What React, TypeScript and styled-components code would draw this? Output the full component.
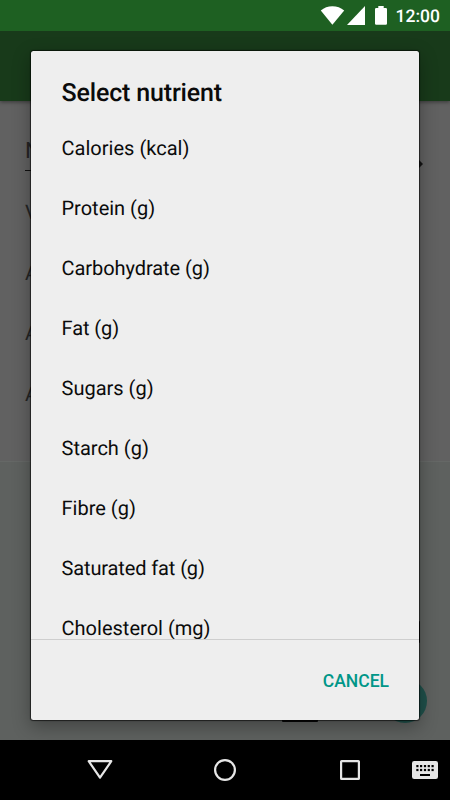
import React from "react";
import styled, { createGlobalStyle } from "styled-components";

const GlobalStyle = createGlobalStyle`
  *, *::before, *::after { box-sizing: border-box; }
  body {
    margin: 0;
    background: #000;
    font-family: Roboto, sans-serif;
    text-rendering: geometricPrecision;
  }
`;

const Screen = styled.div`
  width: 450px;
  height: 800px;
  display: flex;
  flex-direction: column;
  overflow: hidden;
`;

const StatusBar = styled.header`
  flex: 0 0 31px;
  display: flex;
  align-items: center;
  justify-content: flex-end;
  background: #1e6022;
  color: #fff;
`;

const StatusIcons = styled.svg`
  display: block;
  width: 70px;
  height: 31px;
`;

const Clock = styled.time`
  width: 60px;
  padding: 2px 0 0 5.5px;
  font-size: 17.5px;
  line-height: 20px;
  font-weight: 500;
`;

const Content = styled.main`
  position: relative;
  flex: 1;
  min-height: 0;
  display: flex;
  flex-direction: column;
  overflow: hidden;
  background: #5e615f;
`;

const AppBar = styled.div`
  flex: 0 0 70px;
  background: #183a1a;
  box-shadow: 0 1px 4px rgba(0, 0, 0, 0.45);
  z-index: 1;
`;

const Form = styled.div`
  flex: 0 0 361px;
  display: flex;
  flex-direction: column;
  padding: 30px 25px 0;
  background: #616161;
  border-bottom: 1px solid #656866;
  color: #252525;
`;

const NameField = styled.div`
  display: flex;
  justify-content: space-between;
  height: 40px;
  font-size: 22.5px;
  line-height: 40px;
`;

const NameInput = styled.div`
  width: 340px;
  height: 40px;
  border-bottom: 1px solid #101010;
`;

const FieldArrow = styled.svg`
  width: 12px;
  height: 12px;
  margin: 27px 2px 0 0;
  fill: #151515;
`;

const FormRows = styled.div`
  display: flex;
  flex-direction: column;
  padding-top: 11px;
`;

const FormRow = styled.div`
  height: 60.7px;
  font-size: 20px;
  line-height: 61px;
`;

const Fab = styled.div`
  position: absolute;
  right: 23px;
  bottom: 17px;
  width: 44px;
  height: 44px;
  border-radius: 50%;
  background: #1f504a;
`;

const Peek = styled.div<{ $x: number; $y: number; $w: number; $h: number }>`
  position: absolute;
  left: ${(p) => p.$x}px;
  top: ${(p) => p.$y}px;
  width: ${(p) => p.$w}px;
  height: ${(p) => p.$h}px;
  background: #080808;
  border-radius: 1px;
`;

const Overlay = styled.div`
  position: absolute;
  inset: 0;
  z-index: 2;
  padding: 20px 31px;
`;

const Dialog = styled.section`
  height: 669px;
  display: flex;
  flex-direction: column;
  overflow: hidden;
  border-radius: 2.5px;
  background: #eee;
  color: #0b0b0b;
  box-shadow:
    0 0 1px 1px rgba(0, 0, 0, 0.6),
    0 6px 18px 1px rgba(0, 0, 0, 0.3);
`;

const Title = styled.h1`
  flex: 0 0 67px;
  margin: 0;
  padding: 27px 30.5px 0;
  font-size: 25px;
  line-height: 32px;
  font-weight: 500;
  letter-spacing: -0.16px;
`;

const List = styled.ul`
  flex: 1;
  min-height: 0;
  margin: 0;
  padding: 0;
  overflow: hidden;
  list-style: none;
`;

const Item = styled.li<{ $tracking: number }>`
  height: 60px;
  padding: 0 30.5px;
  font-size: 20px;
  line-height: 60px;
  letter-spacing: ${(p) => p.$tracking}px;
`;

const Actions = styled.footer`
  flex: 0 0 81px;
  display: flex;
  align-items: center;
  justify-content: flex-end;
  padding: 1px 30px 0;
  border-top: 1px solid #cecece;
`;

const TextButton = styled.button`
  padding: 0;
  border: 0;
  background: none;
  color: #009688;
  font: 500 17.5px/20px Roboto, sans-serif;
`;

const NavBar = styled.nav`
  flex: 0 0 60px;
  background: #000;
`;

const NavIcons = styled.svg`
  display: block;
  width: 450px;
  height: 60px;
`;

const nutrients = [
  { name: "Calories (kcal)", tracking: 0.02 },
  { name: "Protein (g)", tracking: 0 },
  { name: "Carbohydrate (g)", tracking: -0.06 },
  { name: "Fat (g)", tracking: -0.08 },
  { name: "Sugars (g)", tracking: 0 },
  { name: "Starch (g)", tracking: 0 },
  { name: "Fibre (g)", tracking: 0 },
  { name: "Saturated fat (g)", tracking: -0.12 },
  { name: "Cholesterol (mg)", tracking: 0.02 },
];

const keyColumns = [416.3, 420, 423.9, 427.7, 431.5];

export default function App() {
  return (
    <Screen>
      <GlobalStyle />
      <StatusBar>
        <StatusIcons viewBox="320 0 70 31" fill="#fff">
          <path d="M332.4 24.8 320.8 10.4C324 7.8 328 6.2 332.4 6.2s8.6 1.6 11.8 4.2Z" />
          <path d="M365 6v19h-18Z" />
          <path d="M378.3 6h5.4v2h2.1q1.2 0 1.2 1.2v14.3q0 1.2-1.2 1.2h-9.6q-1.2 0-1.2-1.2V9.2q0-1.2 1.2-1.2h2.1Z" />
        </StatusIcons>
        <Clock>12:00</Clock>
      </StatusBar>
      <Content>
        <AppBar />
        <Form>
          <NameField>
            <NameInput>N</NameInput>
            <FieldArrow viewBox="0 0 12 12">
              <path d="M6 0 12 6 6 12Z" />
            </FieldArrow>
          </NameField>
          <FormRows>
            <FormRow>V</FormRow>
            <FormRow>A</FormRow>
            <FormRow>A</FormRow>
            <FormRow>A</FormRow>
          </FormRows>
        </Form>
        <Fab />
        <Peek $x={282} $y={680} $w={36} $h={10.5} />
        <Peek $x={400} $y={590} $w={20} $h={22} />
        <Overlay>
          <Dialog role="dialog">
            <Title>Select nutrient</Title>
            <List>
              {nutrients.map(({ name, tracking }) => (
                <Item key={name} $tracking={tracking}>
                  {name}
                </Item>
              ))}
            </List>
            <Actions>
              <TextButton>CANCEL</TextButton>
            </Actions>
          </Dialog>
        </Overlay>
      </Content>
      <NavBar>
        <NavIcons viewBox="0 0 450 60" fill="none" stroke="#e6e6e6" strokeWidth="2.2">
          <path d="M88.7 21.2h22.6L100 37.7Z" strokeLinejoin="round" />
          <circle cx="225" cy="30" r="9.9" />
          <rect x="341.1" y="21.1" width="17.8" height="17.8" rx="0.5" />
          <rect x="412" y="21" width="26" height="18" rx="2.2" fill="#e6e6e6" stroke="none" />
          <g fill="#000" stroke="none">
            {keyColumns.map((x) => (
              <React.Fragment key={x}>
                <rect x={x} y="25" width="2.2" height="2.2" />
                <rect x={x} y="28.9" width="2.2" height="2.2" />
              </React.Fragment>
            ))}
            <rect x="420" y="34" width="10" height="2" />
          </g>
        </NavIcons>
      </NavBar>
    </Screen>
  );
}
